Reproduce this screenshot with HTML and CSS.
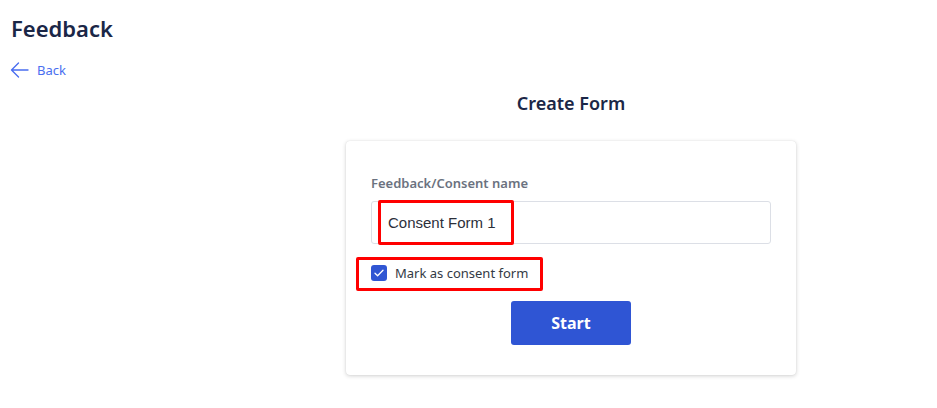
FILE: index.html
```html
<!DOCTYPE html>
<html>
<head>
<meta charset="utf-8">
<link rel="stylesheet" href="styles.css">
</head>
<body>
<header class="page-head">
  <h1 class="title">Feedback</h1>
  <a class="back" href="#">
    <svg class="back-icon" width="19" height="16" viewBox="0 0 19 16" fill="none" stroke="#4a6ef0" stroke-width="1.4" stroke-linecap="round" stroke-linejoin="round"><path d="M18 8H1.5M8.5 1L1.5 8l7 7"/></svg>
    <span>Back</span>
  </a>
</header>
<main class="main">
  <h2 class="form-title">Create Form</h2>
  <section class="card">
    <label class="field-label">Feedback/Consent name</label>
    <div class="input-wrap">
      <div class="input">Consent Form 1</div>
      <div class="mark mark-input"></div>
    </div>
    <div class="check-row">
      <span class="checkbox">
        <svg width="10" height="8" viewBox="0 0 10 8" fill="none" stroke="#fff" stroke-width="1.3" stroke-linecap="round" stroke-linejoin="round"><path d="M1 4.2l2.6 2.5L9 1.2"/></svg>
      </span>
      <span class="check-label">Mark as consent form</span>
      <div class="mark mark-check"></div>
    </div>
    <div class="actions">
      <button class="btn">Start</button>
    </div>
  </section>
</main>
</body>
</html>
```

FILE: styles.css
```css
* { box-sizing: border-box; }
html, body { margin: 0; padding: 0; background: #fff; }
body {
  font-family: "Segoe UI", "Noto Sans", "Open Sans", sans-serif;
  color: #1f2a44;
  width: 937px;
  height: 408px;
  overflow: hidden;
}
.page-head { padding: 11px 0 0 11px; }
.title {
  margin: 0;
  font-size: 22px;
  font-weight: 600;
  line-height: 34px;
  color: #1b2747;
  letter-spacing: 0;
}
.back {
  display: inline-flex;
  align-items: center;
  gap: 8px;
  margin-top: 16px;
  margin-left: -1px;
  text-decoration: none;
  color: #4a6ef0;
  font-size: 13px;
  line-height: 18px;
}
.back-icon { display: block; }
.main {
  padding-left: 205px;
  display: flex;
  flex-direction: column;
  align-items: center;
}
.form-title {
  margin: 7px 0 0;
  font-size: 18px;
  font-weight: 600;
  line-height: 26px;
  color: #1b2747;
}
.card {
  margin-top: 25px;
  width: 450px;
  height: 234px;
  background: #fff;
  border-radius: 4px;
  box-shadow: 0 1px 4px rgba(0,0,0,0.18), 0 0 1px rgba(0,0,0,0.12);
  padding: 33px 25px 0 25px;
}
.field-label {
  display: block;
  font-size: 13px;
  font-weight: 600;
  line-height: 18px;
  color: #6b7280;
}
.input-wrap { position: relative; margin-top: 9px; }
.input {
  height: 43px;
  width: 400px;
  border: 1px solid #dcdfe6;
  border-radius: 3px;
  padding: 0 16px;
  display: flex;
  align-items: center;
  font-family: "Liberation Sans", Arial, sans-serif;
  font-size: 15px;
  color: #2b2f3a;
}
.mark {
  position: absolute;
  border: 3px solid #ff0000;
  border-radius: 2px;
  pointer-events: none;
}
.mark-input { left: 7px; top: -1px; width: 136px; height: 45px; }
.check-row {
  position: relative;
  display: flex;
  align-items: center;
  gap: 8px;
  margin-top: 20px;
  height: 18px;
}
.mark-check { left: -15px; top: -7px; width: 187px; height: 34px; }
.checkbox {
  width: 16px;
  height: 16px;
  border-radius: 3px;
  background: #3056d3;
  display: flex;
  align-items: center;
  justify-content: center;
}
.check-label { font-size: 13px; color: #333a45; line-height: 18px; }
.actions { display: flex; justify-content: center; margin-top: 19px; }
.btn {
  width: 120px;
  height: 44px;
  border: 0;
  border-radius: 3px;
  background: #2f55d4;
  color: #fff;
  font-family: inherit;
  font-size: 16px;
  font-weight: 700;
}
```
